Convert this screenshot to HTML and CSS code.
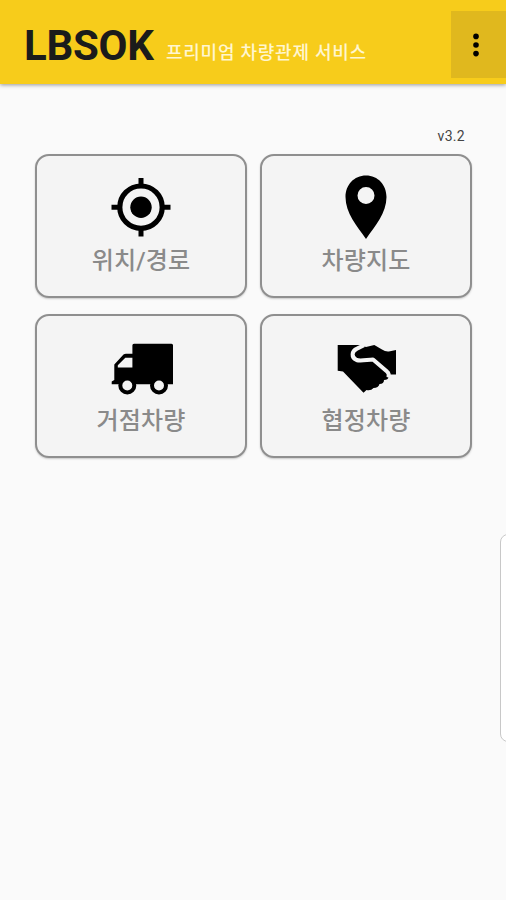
FILE: index.html
```html
<!DOCTYPE html>
<html lang="ko">
<head>
<meta charset="utf-8">
<title>LBSOK</title>
<link rel="stylesheet" href="styles.css">
</head>
<body>
<header class="bar">
  <h1 class="brand">LBSOK</h1>
  <span class="tagline">프리미엄 차량관제 서비스</span>
  <button class="more" aria-label="메뉴">
    <svg width="8" height="24" viewBox="0 0 8 24"><circle cx="4" cy="3.4" r="2.8"/><circle cx="4" cy="12" r="2.8"/><circle cx="4" cy="20.6" r="2.8"/></svg>
  </button>
</header>
<main class="content">
  <div class="version">v3.2</div>
  <div class="grid">
    <button class="card">
      <svg class="icon" viewBox="105 174 72 66">
        <circle cx="141" cy="207.2" r="21.2" fill="none" stroke="#000" stroke-width="5.2"/>
        <circle cx="141" cy="207.2" r="10.7"/>
        <path d="M138.5 178h5v8h-5zM138.5 228.5h5v8h-5zM111.5 204.7h8v5h-8zM162.5 204.7h8v5h-8z"/>
      </svg>
      <span class="label">위치/경로</span>
    </button>
    <button class="card">
      <svg class="icon" viewBox="330 174 72 66">
        <path fill-rule="evenodd" d="M366 175.5C354 175.5 345.5 185 345.5 197C345.5 213 357 226 366 239C375 226 386.5 213 386.5 197C386.5 185 378 175.5 366 175.5ZM366 187a8.5 8.5 0 1 1 0 17a8.5 8.5 0 1 1 0-17Z"/>
      </svg>
      <span class="label">차량지도</span>
    </button>
    <button class="card">
      <svg class="icon" viewBox="105 334 72 66">
        <path fill-rule="evenodd" d="M134 343.7H171.5Q173 343.7 173 345.2V384.2H111.7V381.5L114.3 380V364.5L123.5 354.5Q124.5 353.7 126 353.7H132.4V345.2Q132.4 343.7 134 343.7ZM125.3 357.7L117.8 365.2V367.4H132.4V357.7Z"/>
        <g fill="#f4f4f4" stroke="#000" stroke-width="4"><circle cx="127.3" cy="385.5" r="7"/><circle cx="159" cy="385.5" r="7"/></g>
      </svg>
      <span class="label">거점차량</span>
    </button>
    <button class="card">
      <svg class="icon" viewBox="330 334 72 66">
        <path d="M337.7 345H360L366 347L374.3 345L382 349.5Q386 352.3 390 351.3L396 350V374.5H390L388.5 377Q388.3 380 384 380Q384 384 379.5 384Q378.5 388 373.5 388Q371 391 366.5 390L363.5 392.8L343 371.5L337.7 370.8Z"/>
        <path d="M364 345.2L357 348.6C351.5 351 351 357.5 356.5 360C361 361.5 367 359.6 373 359.4L387 371.5Q389.5 373.5 388.5 377.5" fill="none" stroke="#f4f4f4" stroke-width="4" stroke-linejoin="round"/>
      </svg>
      <span class="label">협정차량</span>
    </button>
  </div>
</main>
<aside class="edge-panel"></aside>
</body>
</html>
```
FILE: styles.css
```css
* { box-sizing: border-box; }
body {
  margin: 0;
  height: 900px;
  overflow: hidden;
  position: relative;
  background: #fafafa;
  font-family: Roboto, "Noto Sans CJK KR", sans-serif;
}
button { border: 0; padding: 0; margin: 0; font: inherit; }
.bar {
  height: 84px;
  display: flex;
  align-items: baseline;
  padding-left: 24px;
  background: #f7cc1b;
  box-shadow: 0 1px 4px rgba(0, 0, 0, .4);
}
.brand {
  margin: 0;
  width: 142px;
  padding-top: 21px;
  font-size: 42px;
  line-height: 50px;
  font-weight: 700;
  letter-spacing: -.3px;
  color: #1b1b1b;
  white-space: nowrap;
}
.tagline {
  font-size: 18px;
  font-weight: 500;
  line-height: 24px;
  letter-spacing: .75px;
  color: #fff6cf;
  white-space: nowrap;
  transform: translateY(-1px);
}
.more {
  width: 55px;
  height: 67px;
  margin: 11px 0 0 auto;
  align-self: flex-start;
  display: flex;
  align-items: center;
  justify-content: center;
  padding-right: 5px;
  background: #e0b81e;
}
.content { padding: 42px 34px 0 35px; }
.version {
  height: 28px;
  padding-right: 7px;
  text-align: right;
  font-size: 14px;
  line-height: 20px;
  letter-spacing: .3px;
  color: #444;
}
.grid {
  display: grid;
  grid-template-columns: 212px 212px;
  grid-auto-rows: 144px;
  gap: 16px 13px;
}
.card {
  display: flex;
  flex-direction: column;
  align-items: center;
  padding-top: 18px;
  border: 2px solid #8f8f8f;
  border-radius: 14px;
  background: #f4f4f4;
  box-shadow: 0 1px 2px rgba(0, 0, 0, .2);
}
.icon { width: 72px; height: 66px; display: block; }
.label {
  margin-top: 4px;
  font-size: 24px;
  line-height: 34px;
  font-weight: 500;
  letter-spacing: .15px;
  color: #8a8a8a;
  white-space: nowrap;
}
.edge-panel {
  position: absolute;
  left: 500px;
  top: 534px;
  width: 20px;
  height: 208px;
  border: 1.5px solid #c8c8c8;
  border-radius: 8px;
  background: #fff;
}
```
